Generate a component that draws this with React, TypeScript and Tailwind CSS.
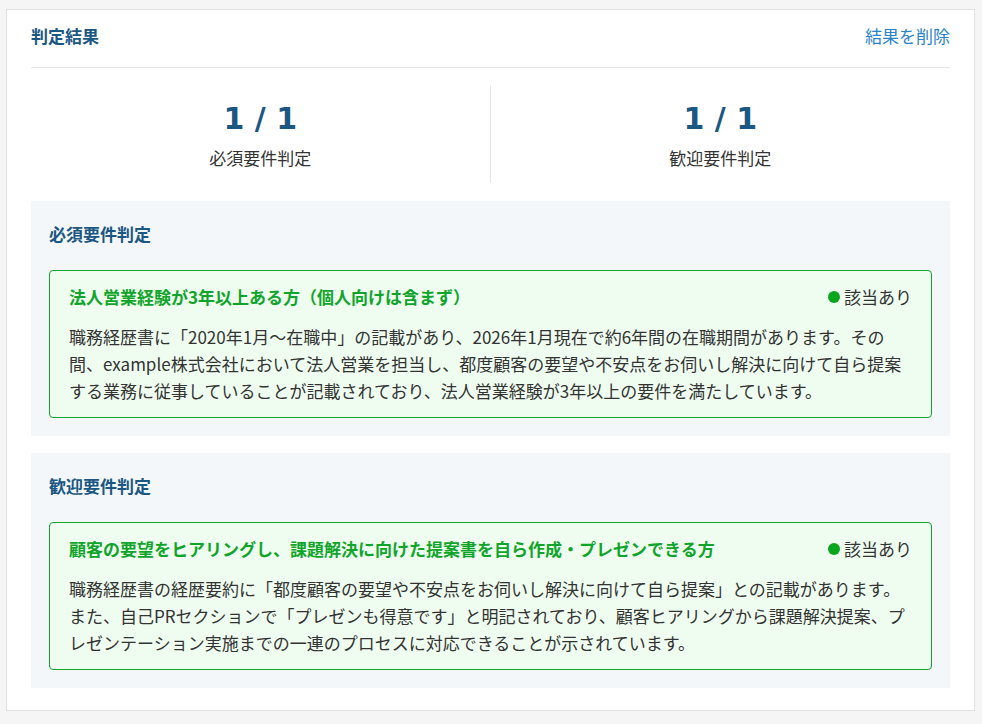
import React from "react";

const font = { fontFamily: '"Noto Sans CJK JP", "Noto Sans", sans-serif' };

type Item = { title: string; body: string };

function Section({ heading, item }: { heading: string; item: Item }) {
  return (
    <div className="bg-[#f3f7fa] px-[18px] pt-[20px] pb-[18px]">
      <div className="text-[17px] leading-[26px] font-bold text-[#1b5783]">{heading}</div>
      <div className="mt-[23px] rounded-[4px] border border-[#14a52a] bg-[#effdf0] px-[19px] pt-[13px] pb-[13px]">
        <div className="flex items-center justify-between">
          <div className="text-[17px] leading-[26px] font-bold text-[#10a52a]">{item.title}</div>
          <div className="flex items-center gap-[4px] text-[17px] leading-[26px] text-[#333333]">
            <span className="inline-block h-[12px] w-[12px] rounded-full bg-[#0aa51f]" />
            <span>該当あり</span>
          </div>
        </div>
        <p className="mt-[13px] text-[17px] leading-[27px] text-[#333333]">{item.body}</p>
      </div>
    </div>
  );
}

export default function App() {
  return (
    <div className="min-h-[724px] bg-[#f5f5f5] pt-[9px] pb-[13px] pl-[6px] pr-[7px]" style={font}>
      <div className="border border-[#e2e2e2] bg-white px-[24px] pt-[13px] pb-[22px]">
        <div className="flex items-center justify-between border-b border-[#e5e5e5] pb-[18px]">
          <div className="text-[17px] leading-[26px] font-bold text-[#1b5783]">判定結果</div>
          <button className="text-[17px] leading-[26px] text-[#2a83cc]">結果を削除</button>
        </div>
        <div className="mt-[18px] mb-[18px] grid grid-cols-2">
          <div className="flex flex-col items-center border-r border-[#e5e5e5] pt-[15px] pb-[12px]">
            <div
              className="text-[30px] leading-[36px] font-bold text-[#1b5783]"
              style={{ fontFamily: '"DejaVu Sans", sans-serif' }}
            >
              1 / 1
            </div>
            <div className="mt-[8px] text-[17px] leading-[26px] text-[#333333]">必須要件判定</div>
          </div>
          <div className="flex flex-col items-center pt-[15px] pb-[12px]">
            <div
              className="text-[30px] leading-[36px] font-bold text-[#1b5783]"
              style={{ fontFamily: '"DejaVu Sans", sans-serif' }}
            >
              1 / 1
            </div>
            <div className="mt-[8px] text-[17px] leading-[26px] text-[#333333]">歓迎要件判定</div>
          </div>
        </div>
        <div className="flex flex-col gap-[17px]">
          <Section
            heading="必須要件判定"
            item={{
              title: "法人営業経験が3年以上ある方（個人向けは含まず）",
              body: "職務経歴書に「2020年1月～在職中」の記載があり、2026年1月現在で約6年間の在職期間があります。その間、example株式会社において法人営業を担当し、都度顧客の要望や不安点をお伺いし解決に向けて自ら提案する業務に従事していることが記載されており、法人営業経験が3年以上の要件を満たしています。",
            }}
          />
          <Section
            heading="歓迎要件判定"
            item={{
              title: "顧客の要望をヒアリングし、課題解決に向けた提案書を自ら作成・プレゼンできる方",
              body: "職務経歴書の経歴要約に「都度顧客の要望や不安点をお伺いし解決に向けて自ら提案」との記載があります。また、自己PRセクションで「プレゼンも得意です」と明記されており、顧客ヒアリングから課題解決提案、プレゼンテーション実施までの一連のプロセスに対応できることが示されています。",
            }}
          />
        </div>
      </div>
    </div>
  );
}
